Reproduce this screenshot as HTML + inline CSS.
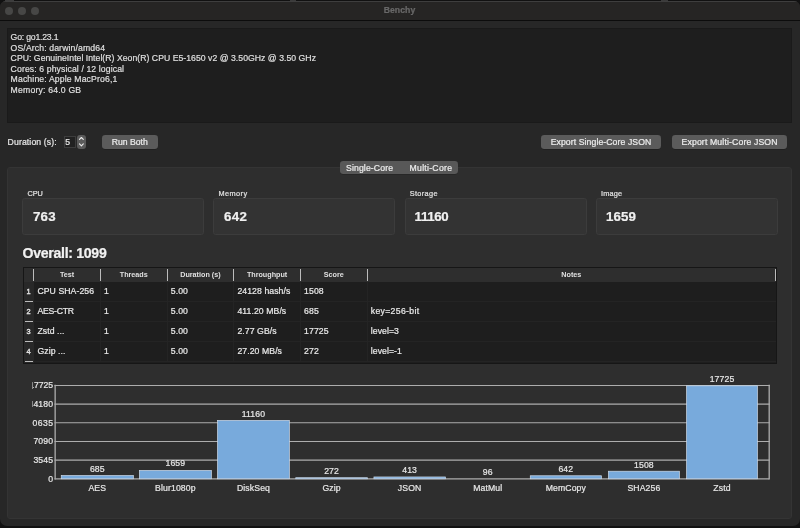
<!DOCTYPE html>
<html>
<head>
<meta charset="utf-8">
<title>Benchy</title>
<style>
html,body{margin:0;padding:0;}
body{-webkit-text-stroke:0.22px;width:800px;height:528px;overflow:hidden;background:#111111;font-family:"Liberation Sans",sans-serif;font-size:8.67px;color:#e4e4e4;position:relative;}
.abs{position:absolute;}
#win{will-change:transform;position:absolute;left:0;top:1px;width:799.5px;height:525px;background:#272727;border-radius:6px 6px 7px 7px;overflow:hidden;}
#titlebar{position:absolute;left:0;top:0;width:100%;height:19px;background:#262524;border-top:1px solid #3e3e3e;box-sizing:border-box;border-bottom:0;}
#titleline{position:absolute;left:0;top:19px;width:100%;height:1.3px;background:#0c0c0c;}
.tl{position:absolute;top:5.5px;width:8.2px;height:8.2px;border-radius:50%;background:#474746;}
#title{position:absolute;left:0;width:799px;top:3.6px;text-align:center;font-weight:bold;font-size:8.67px;color:#686868;letter-spacing:0.05px;}
#info{position:absolute;left:7px;top:27px;width:785px;height:94.7px;background:#1e1e1e;box-sizing:border-box;border:1px solid #1a1a1a;}
#info div{position:absolute;left:2.6px;white-space:pre;line-height:10.67px;height:10.67px;color:#dfdfdf;}
.btn{position:absolute;top:134.2px;height:13.6px;background:#5b5b5b;border-radius:3.2px;text-align:center;line-height:14.6px;color:#ececec;white-space:pre;box-shadow:0 0.5px 0.5px rgba(0,0,0,0.35);}
#panel{position:absolute;left:7px;top:166px;width:785px;height:352.4px;background:#2e2e2e;border:1px solid #343434;box-sizing:border-box;border-radius:3px;}
.lbl{position:absolute;font-size:7.33px;color:#e0e0e0;white-space:pre;line-height:9px;}
.card{position:absolute;top:197.3px;height:36.9px;width:182px;background:#333333;border:1px solid #3c3c3c;box-sizing:border-box;border-radius:2.7px;}
.card span{position:absolute;left:9.7px;top:10.5px;font-weight:bold;font-size:13.3px;line-height:14px;color:#f0f0f0;letter-spacing:0.3px;}
.th{font-size:7.2px;font-weight:bold;-webkit-text-stroke:0;line-height:9px;text-align:center;color:#e0e0e0;white-space:pre;}
.rn{font-size:7.4px;line-height:9px;text-align:center;color:#e2e2e2;-webkit-text-stroke:0.35px;}
.td{font-size:8.67px;line-height:10.67px;color:#e8e8e8;white-space:pre;letter-spacing:0.08px;}
.cl{width:80px;text-align:center;line-height:10.67px;color:#e6e6e6;white-space:pre;letter-spacing:0.12px;}
.yl{line-height:10.67px;color:#e6e6e6;white-space:pre;letter-spacing:0.3px;}
</style>
</head>
<body>
<div class="abs" style="left:4.5px;top:0;width:9.5px;height:1.2px;background:#3c3c3c;"></div>
<div class="abs" style="left:290px;top:0;width:6px;height:1px;background:#3a3a3a;"></div>
<div class="abs" style="left:661px;top:0;width:7px;height:1px;background:#3a3a3a;"></div>
<div id="win">
  <div id="titlebar"></div>
  <div id="titleline"></div>
  <div class="tl" style="left:4.6px"></div>
  <div class="tl" style="left:18px"></div>
  <div class="tl" style="left:31.3px"></div>
  <div id="title">Benchy</div>

  <div id="info">
    <div style="top:3.4px;letter-spacing:-0.2px">Go: go1.23.1</div>
    <div style="top:14.07px;letter-spacing:0.125px">OS/Arch: darwin/amd64</div>
    <div style="top:24.0px;letter-spacing:0.036px">CPU: GenuineIntel Intel(R) Xeon(R) CPU E5-1650 v2 @ 3.50GHz @ 3.50 GHz</div>
    <div style="top:35.41px;letter-spacing:0.112px">Cores: 6 physical / 12 logical</div>
    <div style="top:45.4px;letter-spacing:0.14px">Machine: Apple MacPro6,1</div>
    <div style="top:56.0px;letter-spacing:0.19px">Memory: 64.0 GB</div>
  </div>

  <!-- controls row -->
  <div class="abs" style="left:7.6px;top:135.6px;line-height:10.67px;white-space:pre;letter-spacing:0.12px;color:#e6e6e6;">Duration (s):</div>
  <div class="abs" style="left:64px;top:135.4px;width:12px;height:11.2px;background:#212121;border:0.7px solid #3d3d3d;box-sizing:border-box;"></div>
  <div class="abs" style="left:65.2px;top:136.2px;line-height:10.67px;color:#e6e6e6;">5</div>
  <div class="abs" style="left:77.2px;top:134.2px;width:8.8px;height:13.4px;background:#5b5b5b;border-radius:3px;"></div>
  <svg class="abs" style="left:77.2px;top:134.2px" width="8.8" height="13.4" viewBox="0 0 8.8 13.4"><path d="M2.5 4.4 L4.4 2.5 L6.3 4.4 M2.5 8.9 L4.4 10.8 L6.3 8.9" fill="none" stroke="#ececec" stroke-width="1.15" stroke-linecap="round" stroke-linejoin="round"/></svg>

  <div class="btn" style="left:102px;width:55.5px;">Run Both</div>
  <div class="btn" style="left:541px;width:120px;letter-spacing:0.09px;">Export Single-Core JSON</div>
  <div class="btn" style="left:672px;width:115.2px;letter-spacing:0.15px;">Export Multi-Core JSON</div>

  <!-- tab panel -->
  <div id="panel"></div>
  <div class="abs" style="left:340px;top:160px;width:118px;height:13px;background:#585858;border-radius:3.2px;box-shadow:0 0.5px 0.5px rgba(0,0,0,0.3);"></div>
  <div class="abs" style="left:346px;top:162px;line-height:10.67px;white-space:pre;letter-spacing:0.13px;color:#ececec;">Single-Core</div>
  <div class="abs" style="left:409.6px;top:162px;line-height:10.67px;white-space:pre;letter-spacing:0.27px;color:#ececec;">Multi-Core</div>

  <!-- cards -->
  <div class="lbl" style="left:27.4px;top:187.7px;">CPU</div>
  <div class="lbl" style="left:218.6px;top:187.7px;letter-spacing:0.4px;">Memory</div>
  <div class="lbl" style="left:409.7px;top:187.7px;letter-spacing:0.35px;">Storage</div>
  <div class="lbl" style="left:601px;top:187.7px;letter-spacing:0.2px;">Image</div>
  <div class="card" style="left:22.2px"><span>763</span></div>
  <div class="card" style="left:213.4px"><span>642</span></div>
  <div class="card" style="left:404.6px"><span style="letter-spacing:-0.38px;left:9px">11160</span></div>
  <div class="card" style="left:595.8px"><span style="letter-spacing:0.1px;left:9.3px">1659</span></div>

  <div class="abs" style="left:22.6px;top:244.3px;font-weight:bold;font-size:14.1px;line-height:16px;color:#f2f2f2;white-space:pre;letter-spacing:-0.3px;">Overall: 1099</div>

  <!-- table -->
  <div class="abs" style="left:23.2px;top:266.4px;width:753.40px;height:96.20px;background:#1e1e1e;border:0.8px solid #161616;box-sizing:border-box;"></div>
  <div class="abs" style="left:24.0px;top:267.2px;width:751.80px;height:13.4px;background:#2e2e2e;"></div>
  <div class="abs" style="left:24.0px;top:280.59999999999997px;width:9.9px;height:81.20px;background:#282828;"></div>
  <div class="abs" style="left:33.35px;top:268.40px;width:0.85px;height:11.3px;background:#bcbcbc;"></div>
  <div class="abs" style="left:100.02px;top:268.40px;width:0.85px;height:11.3px;background:#bcbcbc;"></div>
  <div class="abs" style="left:166.68px;top:268.40px;width:0.85px;height:11.3px;background:#bcbcbc;"></div>
  <div class="abs" style="left:233.35px;top:268.40px;width:0.85px;height:11.3px;background:#bcbcbc;"></div>
  <div class="abs" style="left:300.02px;top:268.40px;width:0.85px;height:11.3px;background:#bcbcbc;"></div>
  <div class="abs" style="left:366.68px;top:268.40px;width:0.85px;height:11.3px;background:#bcbcbc;"></div>
  <div class="abs" style="left:775.20px;top:268.40px;width:0.85px;height:11.3px;background:#bcbcbc;"></div>
  <div class="abs th" style="left:33.75px;top:269.20px;width:66.67px;">Test</div>
  <div class="abs th" style="left:100.42px;top:269.20px;width:66.66px;">Threads</div>
  <div class="abs th" style="left:167.08px;top:269.20px;width:66.67px;">Duration (s)</div>
  <div class="abs th" style="left:233.75px;top:269.20px;width:66.67px;">Throughput</div>
  <div class="abs th" style="left:300.42px;top:269.20px;width:66.66px;">Score</div>
  <div class="abs th" style="left:367.08px;top:269.20px;width:408.52px;">Notes</div>
  <div class="abs rn" style="left:23.8px;top:286.10px;width:9.7px;">1</div>
  <div class="abs" style="left:24.80px;top:300.30px;width:8.2px;height:0.85px;background:#bcbcbc;"></div>
  <div class="abs" style="left:33.75px;top:300.30px;width:742.05px;height:0.8px;background:#242424;"></div>
  <div class="abs td" style="left:37.45px;top:285.25px;">CPU SHA-256</div>
  <div class="abs td" style="left:104.12px;top:285.25px;">1</div>
  <div class="abs td" style="left:170.78px;top:285.25px;">5.00</div>
  <div class="abs td" style="left:237.45px;top:285.25px;">24128 hash/s</div>
  <div class="abs td" style="left:304.12px;top:285.25px;">1508</div>
  <div class="abs rn" style="left:23.8px;top:306.15px;width:9.7px;">2</div>
  <div class="abs" style="left:24.80px;top:320.35px;width:8.2px;height:0.85px;background:#bcbcbc;"></div>
  <div class="abs" style="left:33.75px;top:320.35px;width:742.05px;height:0.8px;background:#242424;"></div>
  <div class="abs td" style="left:37.45px;top:305.30px;letter-spacing:-0.22px;">AES-CTR</div>
  <div class="abs td" style="left:104.12px;top:305.30px;">1</div>
  <div class="abs td" style="left:170.78px;top:305.30px;">5.00</div>
  <div class="abs td" style="left:237.45px;top:305.30px;">411.20 MB/s</div>
  <div class="abs td" style="left:304.12px;top:305.30px;">685</div>
  <div class="abs td" style="left:370.78px;top:305.30px;letter-spacing:0.33px;">key=256-bit</div>
  <div class="abs rn" style="left:23.8px;top:326.20px;width:9.7px;">3</div>
  <div class="abs" style="left:24.80px;top:340.40px;width:8.2px;height:0.85px;background:#bcbcbc;"></div>
  <div class="abs" style="left:33.75px;top:340.40px;width:742.05px;height:0.8px;background:#242424;"></div>
  <div class="abs td" style="left:37.45px;top:325.35px;">Zstd ...</div>
  <div class="abs td" style="left:104.12px;top:325.35px;">1</div>
  <div class="abs td" style="left:170.78px;top:325.35px;">5.00</div>
  <div class="abs td" style="left:237.45px;top:325.35px;">2.77 GB/s</div>
  <div class="abs td" style="left:304.12px;top:325.35px;">17725</div>
  <div class="abs td" style="left:370.78px;top:325.35px;">level=3</div>
  <div class="abs rn" style="left:23.8px;top:346.25px;width:9.7px;">4</div>
  <div class="abs" style="left:24.80px;top:360.45px;width:8.2px;height:0.85px;background:#bcbcbc;"></div>
  <div class="abs" style="left:33.75px;top:360.45px;width:742.05px;height:0.8px;background:#242424;"></div>
  <div class="abs td" style="left:37.45px;top:345.40px;">Gzip ...</div>
  <div class="abs td" style="left:104.12px;top:345.40px;">1</div>
  <div class="abs td" style="left:170.78px;top:345.40px;">5.00</div>
  <div class="abs td" style="left:237.45px;top:345.40px;">27.20 MB/s</div>
  <div class="abs td" style="left:304.12px;top:345.40px;">272</div>
  <div class="abs td" style="left:370.78px;top:345.40px;">level=-1</div>
  <div class="abs" style="left:100.12px;top:280.70px;width:0.8px;height:80.20px;background:#242424;"></div>
  <div class="abs" style="left:166.78px;top:280.70px;width:0.8px;height:80.20px;background:#242424;"></div>
  <div class="abs" style="left:233.45px;top:280.70px;width:0.8px;height:80.20px;background:#242424;"></div>
  <div class="abs" style="left:300.12px;top:280.70px;width:0.8px;height:80.20px;background:#242424;"></div>
  <div class="abs" style="left:366.78px;top:280.70px;width:0.8px;height:80.20px;background:#242424;"></div>

  <!-- chart -->
  <svg class="abs" style="left:0;top:0" width="800" height="527" viewBox="0 0 800 527">
  <line x1="54.50" y1="384.45" x2="769.85" y2="384.45" stroke="#adadad" stroke-width="1.15"/>
  <line x1="54.50" y1="403.12" x2="769.85" y2="403.12" stroke="#adadad" stroke-width="1.15"/>
  <line x1="54.50" y1="421.79" x2="769.85" y2="421.79" stroke="#adadad" stroke-width="1.15"/>
  <line x1="54.50" y1="440.46" x2="769.85" y2="440.46" stroke="#adadad" stroke-width="1.15"/>
  <line x1="54.50" y1="459.13" x2="769.85" y2="459.13" stroke="#adadad" stroke-width="1.15"/>
  <line x1="54.50" y1="477.80" x2="769.20" y2="477.80" stroke="#adadad" stroke-width="1.3"/>
  <line x1="55.15" y1="383.80" x2="55.15" y2="478.45" stroke="#adadad" stroke-width="1.3"/>
  <line x1="769.20" y1="383.80" x2="769.20" y2="478.45" stroke="#adadad" stroke-width="1.3"/>
  <rect x="61.25" y="474.54" width="72.1" height="3.26" fill="#78aadc" stroke="#cfdceb" stroke-width="0.7"/>
  <rect x="139.42" y="469.41" width="71.94" height="8.39" fill="#78aadc" stroke="#cfdceb" stroke-width="0.7"/>
  <rect x="217.59" y="419.38" width="71.78" height="58.42" fill="#78aadc" stroke="#cfdceb" stroke-width="0.7"/>
  <rect x="295.76" y="476.72" width="71.62" height="1.08" fill="#78aadc" stroke="#cfdceb" stroke-width="0.7"/>
  <rect x="373.93" y="475.97" width="71.46" height="1.83" fill="#78aadc" stroke="#cfdceb" stroke-width="0.7"/>
  <rect x="530.27" y="474.77" width="71.14" height="3.03" fill="#78aadc" stroke="#cfdceb" stroke-width="0.7"/>
  <rect x="608.44" y="470.21" width="70.98" height="7.59" fill="#78aadc" stroke="#cfdceb" stroke-width="0.7"/>
  <rect x="686.61" y="384.80" width="70.82" height="93.00" fill="#78aadc" stroke="#cfdceb" stroke-width="0.7"/>
  </svg>
  <div class="abs cl" style="left:57.30px;top:462.55px;">685</div>
  <div class="abs cl" style="left:57.30px;top:481.90px;">AES</div>
  <div class="abs cl" style="left:135.39px;top:457.42px;">1659</div>
  <div class="abs cl" style="left:135.39px;top:481.90px;">Blur1080p</div>
  <div class="abs cl" style="left:213.48px;top:407.79px;">11160</div>
  <div class="abs cl" style="left:213.48px;top:481.90px;">DiskSeq</div>
  <div class="abs cl" style="left:291.57px;top:464.73px;">272</div>
  <div class="abs cl" style="left:291.57px;top:481.90px;">Gzip</div>
  <div class="abs cl" style="left:369.66px;top:463.98px;">413</div>
  <div class="abs cl" style="left:369.66px;top:481.90px;">JSON</div>
  <div class="abs cl" style="left:447.75px;top:465.65px;">96</div>
  <div class="abs cl" style="left:447.75px;top:481.90px;">MatMul</div>
  <div class="abs cl" style="left:525.84px;top:462.78px;">642</div>
  <div class="abs cl" style="left:525.84px;top:481.90px;">MemCopy</div>
  <div class="abs cl" style="left:603.93px;top:458.72px;">1508</div>
  <div class="abs cl" style="left:603.93px;top:481.90px;">SHA256</div>
  <div class="abs cl" style="left:682.02px;top:372.81px;">17725</div>
  <div class="abs cl" style="left:682.02px;top:481.90px;">Zstd</div>
  <div class="abs" style="left:32.3px;top:376.45px;width:21.6px;height:109.35px;overflow:hidden;">
    <div class="abs yl" style="right:0.95px;top:2.80px;letter-spacing:-0.05px;">17725</div>
    <div class="abs yl" style="right:0.80px;top:21.47px;letter-spacing:0.1px;">14180</div>
    <div class="abs yl" style="right:0.52px;top:40.14px;letter-spacing:0.38px;">10635</div>
    <div class="abs yl" style="right:0.80px;top:58.81px;letter-spacing:0.1px;">7090</div>
    <div class="abs yl" style="right:0.80px;top:77.48px;letter-spacing:0.1px;">3545</div>
    <div class="abs yl" style="right:0.90px;top:96.15px;letter-spacing:0px;">0</div>
  </div>
  <div class="abs" style="left:32.4px;top:381.55px;width:0.9px;height:6.0px;background:#8a8a8a;"></div>
  <div class="abs" style="left:32.4px;top:400.22px;width:0.9px;height:6.0px;background:#8a8a8a;"></div>
</div>
</body>
</html>
